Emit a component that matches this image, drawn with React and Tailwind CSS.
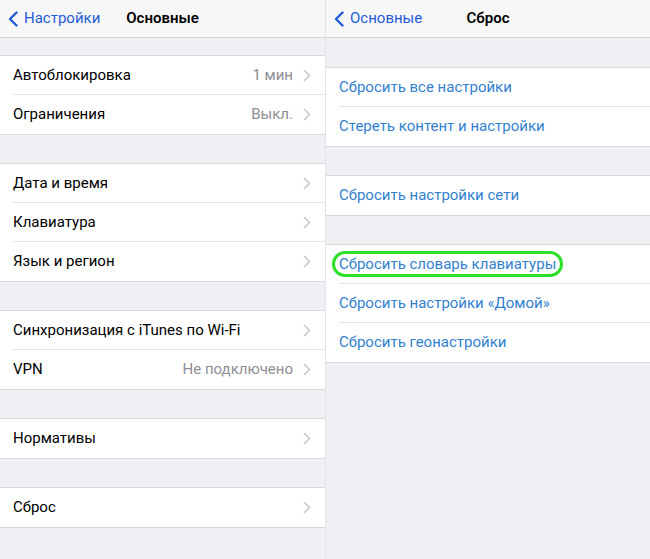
const LEFT = [
  [{ label: "Автоблокировка", value: "1 мин" }, { label: "Ограничения", value: "Выкл." }],
  [{ label: "Дата и время" }, { label: "Клавиатура" }, { label: "Язык и регион" }],
  [{ label: "Синхронизация с iTunes по Wi-Fi" }, { label: "VPN", value: "Не подключено" }],
  [{ label: "Нормативы" }],
  [{ label: "Сброс" }]
];

const RIGHT = [
  ["Сбросить все настройки", "Стереть контент и настройки"],
  ["Сбросить настройки сети"],
  ["Сбросить словарь клавиатуры", "Сбросить настройки «Домой»", "Сбросить геонастройки"]
];

function Chevron() {
  return (
    <svg width="8" height="13" viewBox="0 0 8 13" className="shrink-0">
      <polyline points="1.5,1.5 6.5,6.5 1.5,11.5" fill="none" stroke="#c7c7cc" strokeWidth="1.6" strokeLinecap="round" strokeLinejoin="round" />
    </svg>
  );
}

function NavBar({ back, title }) {
  return (
    <div className="relative flex h-[38px] items-center border-b border-[#d4d4d8] bg-[#f7f7f8]">
      <div className="flex items-center gap-[6px] pl-[8px] text-[15px] text-[#1f5bd6]">
        <svg width="10" height="16" viewBox="0 0 10 16">
          <polyline points="8.5,1.5 2,8 8.5,14.5" fill="none" stroke="#1f5bd6" strokeWidth="2.4" strokeLinecap="round" strokeLinejoin="round" />
        </svg>
        <span>{back}</span>
      </div>
      <div className="pointer-events-none absolute inset-x-0 text-center text-[15px] font-semibold text-black">{title}</div>
    </div>
  );
}

function Section({ children }) {
  return <div className="divide-y divide-[#e2e2e6] border-y border-[#dadade] bg-white pl-[13px]">{children}</div>;
}

function SettingsRow({ label, value }) {
  return (
    <div className="flex h-[39px] items-center pr-[14px] text-[15px]">
      <span className="flex-1 text-black">{label}</span>
      {value ? <span className="mr-[10px] text-[#8e8e93]">{value}</span> : null}
      <Chevron />
    </div>
  );
}

function LinkRow({ label, marked }) {
  return (
    <div className="flex h-[39px] items-center text-[15px] text-[#3281cf]">
      <span className="relative">
        {label}
        {marked ? <span className="absolute -inset-x-[7px] -inset-y-[2px] rounded-full border-[3px] border-[#2ee02a]" /> : null}
      </span>
    </div>
  );
}

export default function App() {
  return (
    <div className="flex h-[559px] w-[650px] bg-[#efeff4]" style={{ fontFamily: "Roboto, 'Noto Sans', sans-serif" }}>
      <div className="w-[325px]">
        <NavBar back="Настройки" title="Основные" />
        <div className="h-[17px]" />
        {LEFT.map((rows, i) => (
          <div key={i}>
            {i > 0 ? <div className="h-[28px]" /> : null}
            <Section>
              {rows.map((row) => (
                <SettingsRow key={row.label} {...row} />
              ))}
            </Section>
          </div>
        ))}
      </div>
      <div className="w-[325px] border-l border-[#e4e4e8]">
        <NavBar back="Основные" title="Сброс" />
        <div className="h-[29px]" />
        {RIGHT.map((rows, i) => (
          <div key={i}>
            {i > 0 ? <div className="h-[28px]" /> : null}
            <Section>
              {rows.map((label) => (
                <LinkRow key={label} label={label} marked={label === "Сбросить словарь клавиатуры"} />
              ))}
            </Section>
          </div>
        ))}
      </div>
    </div>
  );
}
